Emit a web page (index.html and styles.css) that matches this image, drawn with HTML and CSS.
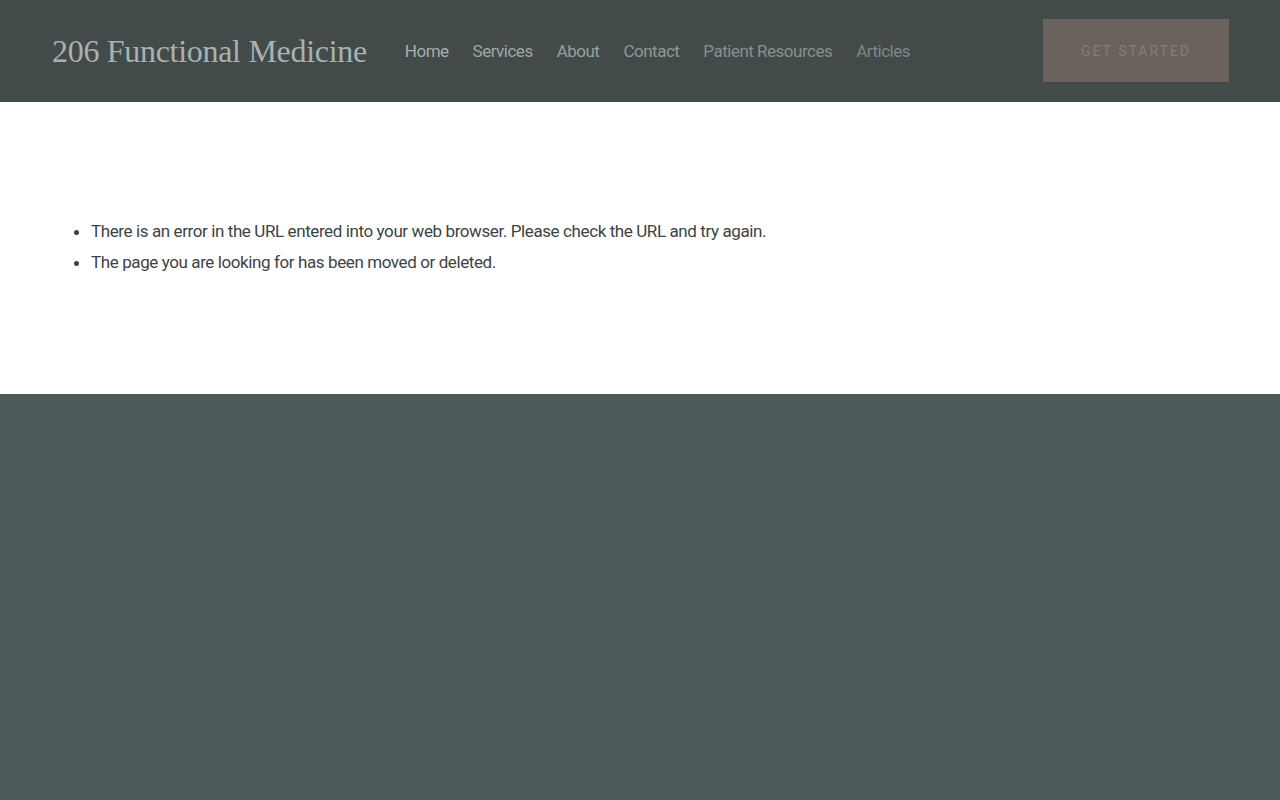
FILE: index.html
```html
<!DOCTYPE html>
<html lang="en">
<head>
  <meta charset="UTF-8" />
  <meta name="viewport" content="width=device-width, initial-scale=1.0" />
  <title>206 Functional Medicine</title>
  <link rel="stylesheet" href="styles.css">
</head>
<body>
  <header class="header">
    <a class="logo" href="#">206 Functional Medicine</a>
    <nav class="nav">
      <a href="#" class="nav-link n1">Home</a>
      <a href="#" class="nav-link n2">Services</a>
      <a href="#" class="nav-link n3">About</a>
      <a href="#" class="nav-link n4">Contact</a>
      <a href="#" class="nav-link n5">Patient Resources</a>
      <a href="#" class="nav-link n6">Articles</a>
    </nav>
    <a href="#" class="cta">GET STARTED</a>
  </header>

  <main class="content">
    <ul class="error-list">
      <li>There is an error in the URL entered into your web browser. Please check the URL and try again.</li>
      <li>The page you are looking for has been moved or deleted.</li>
    </ul>
  </main>

  <footer class="footer"></footer>
</body>
</html>
```

FILE: styles.css
```css
* {
  margin: 0;
  padding: 0;
  box-sizing: border-box;
}

body {
  font-family: Roboto, 'Liberation Sans', sans-serif;
  background: #4b5a59;
  min-height: 800px;
  display: flex;
  flex-direction: column;
}

a {
  text-decoration: none;
}

/* Header */
.header {
  height: 102px;
  background: #424b4a;
  display: flex;
  align-items: center;
  padding: 0 51px 0 52px;
}

.logo {
  font-family: 'Liberation Serif', 'DejaVu Serif', serif;
  font-size: 32px;
  color: #a8b2b0;
  letter-spacing: -0.3px;
  margin-right: 38px;
  white-space: nowrap;
}

.nav {
  display: flex;
  gap: 24px;
  flex: 1;
}

.nav-link {
  font-size: 17px;
  letter-spacing: -0.5px;
  white-space: nowrap;
}

.n1 { color: #a6afad; }
.n2 { color: #9ea7a5; }
.n3 { color: #97a09e; }
.n4 { color: #8f9896; }
.n5 { color: #87908e; }
.n6 { color: #7e8886; }

.cta {
  width: 186px;
  height: 63px;
  margin-top: -1px;
  background: #6b625c;
  color: #857c77;
  font-size: 14px;
  letter-spacing: 2px;
  display: flex;
  align-items: center;
  justify-content: center;
}

/* Content */
.content {
  background: #fff;
  height: 292px;
  padding: 114px 52px 0 91px;
}

.error-list {
  color: #3c4443;
  font-size: 17px;
  line-height: 31px;
  letter-spacing: -0.4px;
}

.footer {
  flex: 1;
  background: #4b5a59;
}
```
